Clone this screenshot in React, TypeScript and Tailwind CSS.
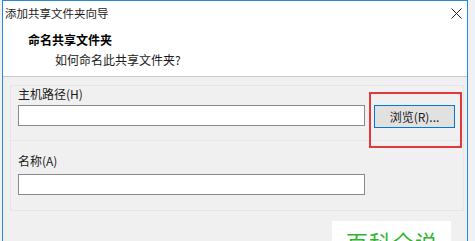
import React from "react";

const cjk = { fontFamily: '"Noto Sans CJK SC", "Microsoft YaHei", sans-serif' };

export default function App() {
  return (
    <div className="relative w-[475px] h-[241px] overflow-hidden bg-[#eef2f6]" style={cjk}>
      <div className="ml-[2px] w-[466px] h-[260px] border-l border-r border-t border-[#2b88d8] bg-[#f0f0f0] flex flex-col">
        {/* title bar */}
        <div className="h-[23px] bg-white flex items-center justify-between pl-[2px] pr-[5px]">
          <span className="text-[11.5px] leading-[16px] text-[#1a1a1a]">添加共享文件夹向导</span>
          <svg width="11" height="11" viewBox="0 0 11 11" className="mt-[1px]">
            <path d="M0.5 0.5 L10.5 10.5 M10.5 0.5 L0.5 10.5" stroke="#222" strokeWidth="1" />
          </svg>
        </div>
        {/* header */}
        <div className="h-[53px] bg-white pt-[8px] border-b border-[#c8c8c8] flex flex-col">
          <div className="pl-[25px] text-[12px] leading-[16px] font-bold text-black">命名共享文件夹</div>
          <div className="pl-[52px] mt-[4px] text-[12px] leading-[16px] text-[#1a1a1a]">如何命名此共享文件夹?</div>
        </div>
        {/* body */}
        <div className="pt-[8px] pl-[7px] pr-[3px] flex flex-col">
          <div className="border border-[#e6e6e6] bg-[#f0f0f0] flex flex-col">
            <div className="px-[7px] pb-[12px] flex flex-col">
              <div className="text-[12px] leading-[16px] text-[#1a1a1a]">主机路径(H)</div>
              <div className="mt-[3px] flex items-start gap-[9px]">
                <div className="w-[347px] h-[21px] bg-white border border-[#8a8a8a]" />
                <div className="w-[81px] h-[23px] bg-[#e1e1e1] border border-[#0078d7] flex items-center justify-center text-[12px] leading-[16px] text-[#1a1a1a]">
                  浏览(R)...
                </div>
              </div>
            </div>
            <div className="border-t border-[#e6e6e6] px-[7px] pt-[12px] pb-[15px] flex flex-col">
              <div className="text-[12px] leading-[16px] text-[#1a1a1a]">名称(A)</div>
              <div className="mt-[5px] w-[347px] h-[21px] bg-white border border-[#8a8a8a]" />
            </div>
          </div>
        </div>
      </div>
      {/* red highlight */}
      <div className="absolute left-[369px] top-[92px] w-[93px] h-[56px] border-2 border-[#e2383c]" />
      {/* watermark */}
      <div className="absolute left-[332px] top-[221px] w-[119px] h-[30px] bg-white pl-[14px] pt-[6px]">
        <span className="text-[22px] leading-[28px] text-[#2fb52f] tracking-[1px]">百科全说</span>
      </div>
    </div>
  );
}
